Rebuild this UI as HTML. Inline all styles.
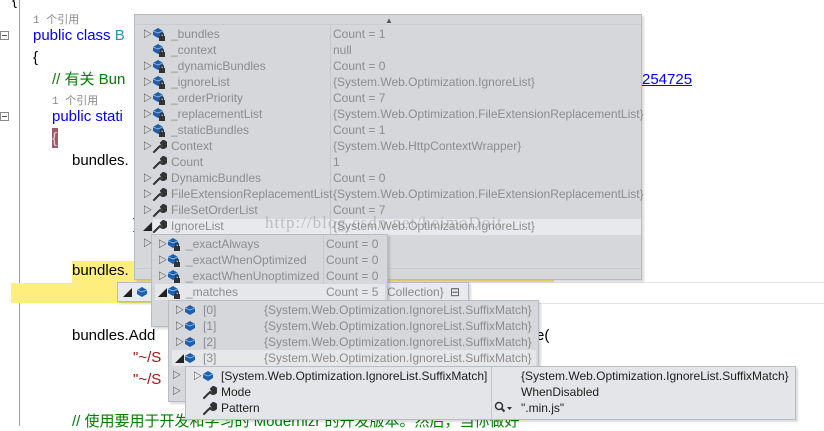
<!DOCTYPE html><html><head><meta charset="utf-8"><style>
body{margin:0;width:824px;height:426px;overflow:hidden;background:#fff;position:relative;font-family:"Liberation Sans","Noto Sans CJK SC",sans-serif}
.a{position:absolute;white-space:nowrap}
.c{font-size:15px;line-height:18px}
.r{font-size:11px;color:#888;font-family:"Liberation Mono","Noto Sans CJK SC",monospace}
.p{position:absolute;background:#d5d7db;border:1px solid #b7bbc3;box-shadow:2px 2px 2px rgba(0,0,0,.15)}
.row{position:absolute;height:16px;font-size:12px;line-height:16px;color:#8c8c8c;white-space:nowrap}
.hl{background:#e6e7ea}
.ex{position:absolute;font-size:9px;color:#222;top:0}
.cube{position:absolute;top:2px;width:12px;height:11px}
</style></head><body>
<svg class="a" style="left:0;top:0" width="30" height="426"><line x1="19.5" y1="0" x2="19.5" y2="426" stroke="#a0a0a0"/>
<rect x="0.5" y="31.5" width="8" height="8" fill="#fff" stroke="#888"/><line x1="2" y1="35.5" x2="7" y2="35.5" stroke="#555"/>
<rect x="0.5" y="112.5" width="8" height="8" fill="#fff" stroke="#888"/><line x1="2" y1="116.5" x2="7" y2="116.5" stroke="#555"/></svg>
<div class="a c" style="left:12px;top:-8px">{</div>
<div class="a r" style="left:33px;top:11px">1 个引用</div>
<div class="a c" style="left:33px;top:27px;color:#0000ff">public class <span style="color:#2b91af">B</span></div>
<div class="a c" style="left:33px;top:49px">{</div>
<div class="a c" style="left:52px;top:71px;color:#008000">// 有关 Bun</div>
<div class="a c" style="left:642px;top:71px;color:#0000ff;text-decoration:underline">254725</div>
<div class="a r" style="left:52px;top:92px">1 个引用</div>
<div class="a c" style="left:52px;top:108px;color:#0000ff">public stati</div>
<div class="a" style="left:52px;top:128px;width:6px;height:20px;background:#9e5a6a"></div>
<div class="a c" style="left:52px;top:130px;color:#e0d0d0">{</div>
<div class="a c" style="left:72px;top:152px">bundles.</div>
<div class="a c" style="left:133px;top:216px">}</div>
<div class="a" style="left:72px;top:261px;width:482px;height:22px;background:#fdee7e"></div>
<div class="a" style="left:11px;top:283px;width:200px;height:20px;background:#fdee7e"></div>
<div class="a" style="left:467px;top:282px;width:357px;height:1px;background:#e6e6e6"></div>
<div class="a" style="left:467px;top:303px;width:357px;height:1px;background:#e6e6e6"></div>
<div class="a c" style="left:72px;top:262px">bundles.</div>
<div class="a c" style="left:72px;top:327px">bundles.Add</div>
<div class="a c" style="left:536px;top:327px">e(</div>
<div class="a c" style="left:133px;top:349px;color:#a31515">"~/S</div>
<div class="a c" style="left:133px;top:371px;color:#a31515">"~/S</div>
<div class="a c" style="left:72px;top:413px;color:#008000">// 使用要用于开发和学习的 Modernizr 的开发版本。然后，当你做好</div>

<svg width="0" height="0" style="position:absolute"><defs>
<g id="cb"><path d="M1 4 L6 1 L11 4 L11 8 L6 11 L1 8Z" fill="#1d5fa8"/><path d="M1 4 L6 6 L11 4" fill="none" stroke="#7fb1e6" stroke-width="1"/></g>
<g id="lk"><rect x="7" y="9" width="6" height="5" fill="#333"/><path d="M8.5 9 V7.5 a1.5 1.5 0 0 1 3 0 V9" fill="none" stroke="#333"/></g>
<g id="wr"><path d="M2 13 L8 7 M8 7 a3.5 3.5 0 1 0 3-5 l-2 2 l1 2 l2 1 l2-2 a3.5 3.5 0 0 1-5 3" fill="#333" stroke="#333" stroke-width="2" stroke-linecap="round"/></g>
</defs></svg>

<div class="p" style="left:134px;top:14px;width:506px;height:264px">
<div class="a" style="left:250px;top:1px;font-size:8px;color:#555">▲</div>
<div class="a" style="left:0;top:9px;width:506px;height:1px;background:#c8cbd0"></div>
<div class="a" style="left:18px;top:204px;width:488px;height:16px;background:#e8e9ec"></div>
<div class="a" style="left:195px;top:10px;width:1px;height:210px;background:#c4c7cc"></div>
<div class="a" style="left:0;top:253px;width:506px;height:1px;background:#c8cbd0"></div>
</div>
<div class="p" style="left:117px;top:282px;width:350px;height:18px;background:#e8e9ec">
<div class="ex" style="left:5px;top:3px">◢</div>
<svg class="cube" style="left:18px;top:3px" width="13" height="13"><use href="#cb"/></svg>
<div class="row" style="left:269px;top:1px;color:#888">Collection}</div>
<div class="row" style="left:332px;top:1px;color:#555">⊟</div>
</div>
<div class="p" style="left:151px;top:234px;width:235px;height:91px">
<div class="a" style="left:171px;top:0;width:1px;height:66px;background:#c4c7cc"></div>
</div>
<div class="p" style="left:168px;top:300px;width:369px;height:100px"></div>
<div class="p" style="left:185px;top:366px;width:609px;height:52px;background:#e4e5e8">
<div class="a" style="left:305px;top:0;width:1px;height:52px;background:#c4c7cc"></div>
</div>
<div class="a" style="left:265px;top:213px;font-family:'Liberation Serif',serif;font-size:17px;color:rgba(170,170,170,.7);letter-spacing:1px">http://blog.csdn.net/heimaDoit</div>

<div id="rows"></div>
<script>
var H='';
function row(x,y,w,ex,ic,name,vx,val,hl,col){
 H+='<div class="row'+(hl?' hl':'')+'" style="left:'+x+'px;top:'+y+'px;width:'+w+'px;'+(col?'color:'+col:'')+'">';
 if(ex)H+='<div class="ex" style="left:3px;top:'+(ex=='◢'?1:0)+'px">'+ex+'</div>';
 if(ic=='f')H+='<svg class="cube" style="left:12px;top:1px;width:16px;height:15px"><use href="#cb"/><use href="#lk"/></svg>';
 if(ic=='c')H+='<svg class="cube" style="left:12px;top:2px;width:13px"><use href="#cb"/></svg>';
 if(ic=='w')H+='<svg class="cube" style="left:12px;top:1px;width:15px;height:15px"><use href="#wr"/></svg>';
 H+='<span style="position:absolute;left:'+(ic?31:14)+'px">'+name+'</span><span style="position:absolute;left:'+vx+'px">'+val+'</span></div>';
}
var r1=[['▷','f','_bundles','Count = 1'],['','f','_context','null'],['▷','f','_dynamicBundles','Count = 0'],['▷','f','_ignoreList','{System.Web.Optimization.IgnoreList}'],['▷','f','_orderPriority','Count = 7'],['▷','f','_replacementList','{System.Web.Optimization.FileExtensionReplacementList}'],['▷','f','_staticBundles','Count = 1'],['▷','w','Context','{System.Web.HttpContextWrapper}'],['','w','Count','1'],['▷','w','DynamicBundles','Count = 0'],['▷','w','FileExtensionReplacementList','{System.Web.Optimization.FileExtensionReplacementList}'],['▷','w','FileSetOrderList','Count = 7'],['◢','w','IgnoreList','{System.Web.Optimization.IgnoreList}']];
r1.forEach(function(r,i){row(140,26+16*i,500,r[0],r[1],r[2],193,r[3],0)});
H+='<div class="ex a" style="left:143px;top:236px;font-size:9px">▷</div>';
var r2=[['▷','_exactAlways','Count = 0'],['▷','_exactWhenOptimized','Count = 0'],['▷','_exactWhenUnoptimized','Count = 0'],['◢','_matches','Count = 5']];
r2.forEach(function(r,i){row(155,236+16*i,230,r[0],'f',r[1],171,r[2],i==3)});
for(var i=0;i<4;i++)row(172,302+16*i,364,i==3?'◢':'▷','c','['+i+']',92,'{System.Web.Optimization.IgnoreList.SuffixMatch}',i==3);
H+='<div class="ex a" style="left:172px;top:368px;font-size:9px">▷</div><div class="ex a" style="left:172px;top:384px;font-size:9px">▷</div>';
row(190,368,605,'▷','c','[System.Web.Optimization.IgnoreList.SuffixMatch]',331,'{System.Web.Optimization.IgnoreList.SuffixMatch}',0,'#1e1e1e');
row(190,384,605,'','w','Mode',331,'WhenDisabled',0,'#1e1e1e');
row(190,400,605,'','w','Pattern',331,'".min.js"',0,'#1e1e1e');
H+='<svg class="a" style="left:494px;top:401px" width="20" height="12"><circle cx="5" cy="5" r="3.5" fill="none" stroke="#333" stroke-width="1.5"/><line x1="7.5" y1="7.5" x2="10.5" y2="10.5" stroke="#333" stroke-width="2"/><path d="M13 6 h5 l-2.5 3z" fill="#333"/></svg>';
document.getElementById('rows').innerHTML=H;
</script>
</body></html>
